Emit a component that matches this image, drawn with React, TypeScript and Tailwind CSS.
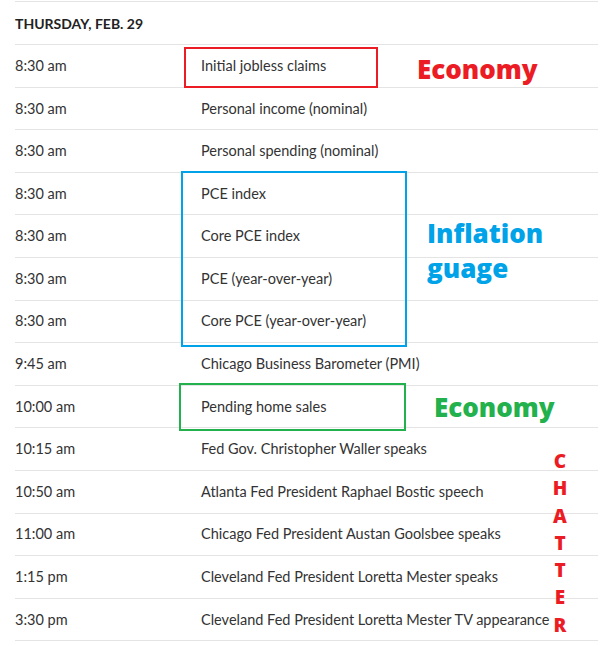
const rows: [string, string][] = [
  ['8:30 am', 'Initial jobless claims'],
  ['8:30 am', 'Personal income (nominal)'],
  ['8:30 am', 'Personal spending (nominal)'],
  ['8:30 am', 'PCE index'],
  ['8:30 am', 'Core PCE index'],
  ['8:30 am', 'PCE (year-over-year)'],
  ['8:30 am', 'Core PCE (year-over-year)'],
  ['9:45 am', 'Chicago Business Barometer (PMI)'],
  ['10:00 am', 'Pending home sales'],
  ['10:15 am', 'Fed Gov. Christopher Waller speaks'],
  ['10:50 am', 'Atlanta Fed President Raphael Bostic speech'],
  ['11:00 am', 'Chicago Fed President Austan Goolsbee speaks'],
  ['1:15 pm', 'Cleveland Fed President Loretta Mester speaks'],
  ['3:30 pm', 'Cleveland Fed President Loretta Mester TV appearance'],
];

export default function App() {
  return (
    <div className="relative w-[600px] h-[646px] overflow-hidden bg-white font-['Lato','Liberation_Sans',sans-serif] text-[#333]">
      <div className="ml-[15px] mr-[2px] mt-[1px] border-t border-[#e4e4e4]">
        <div className="h-[43px] flex items-center text-[14px] font-bold text-[#222] border-b border-[#e4e4e4]">
          THURSDAY, FEB. 29
        </div>
        {rows.map(([time, label], i) => (
          <div key={i} className="h-[42.6px] flex items-center text-[14.5px] border-b border-[#e4e4e4]">
            <div className="w-[186px] shrink-0">{time}</div>
            <div>{label}</div>
          </div>
        ))}
      </div>

      {/* annotation boxes */}
      <div className="absolute left-[184px] top-[47px] w-[194px] h-[41px] border-2 border-[#ec1c24]" />
      <div className="absolute left-[181px] top-[171px] w-[226px] h-[176px] border-2 border-[#00a2e8]" />
      <div className="absolute left-[179px] top-[383px] w-[227px] h-[48px] border-2 border-[#22b14c]" />

      {/* annotation labels */}
      <div className="absolute left-[417px] top-[51px] text-[26px] leading-[36px] font-extrabold text-[#ec1c24] font-['Open_Sans',sans-serif]">
        Economy
      </div>
      <div className="absolute left-[427px] top-[216px] text-[26px] leading-[35px] font-extrabold text-[#00a2e8] font-['Open_Sans',sans-serif]">
        Inflation
        <br />
        guage
      </div>
      <div className="absolute left-[434px] top-[389px] text-[26px] leading-[36px] font-extrabold text-[#22b14c] font-['Open_Sans',sans-serif]">
        Economy
      </div>
      <div className="absolute left-[551px] top-[448px] w-[18px] flex flex-col items-center text-[19px] leading-[27.3px] font-extrabold text-[#ec1c24] font-['Open_Sans',sans-serif]">
        {'CHATTER'.split('').map((c, i) => (
          <span key={i}>{c}</span>
        ))}
      </div>
    </div>
  );
}
